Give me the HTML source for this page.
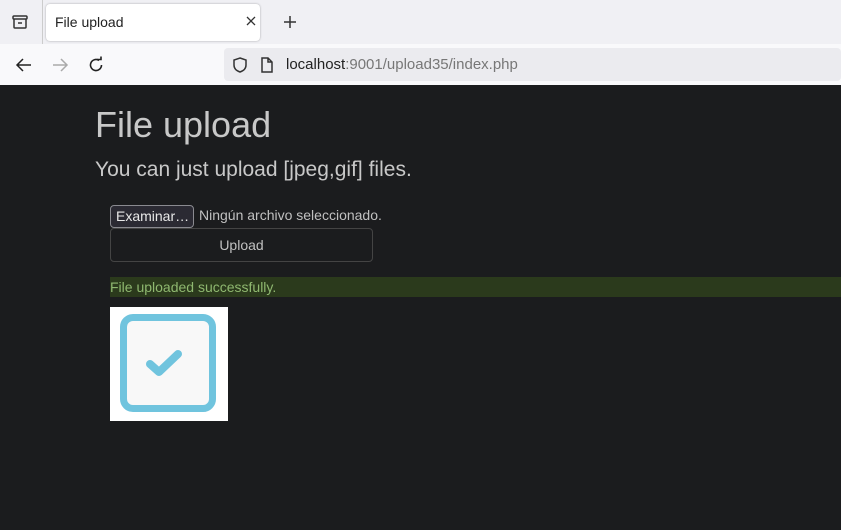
<!DOCTYPE html>
<html><head><style>
*{margin:0;padding:0;box-sizing:border-box}
body{width:841px;height:530px;overflow:hidden;background:#1b1c1e;font-family:"Liberation Sans",sans-serif;position:relative}
.tabbar{position:absolute;left:0;top:0;width:841px;height:44px;background:#f0f0f4}
.tab{position:absolute;left:46px;top:4px;width:214px;height:37px;background:#fff;border-radius:4px;box-shadow:0 0 2px rgba(0,0,0,.3)}
.nav{position:absolute;left:0;top:44px;width:841px;height:41px;background:#f9f9fb}
.url{position:absolute;left:224px;top:48px;width:617px;height:33px;background:#ebebef;border-radius:4px}
.t{position:absolute;white-space:nowrap}
</style></head><body>
<div class="tabbar"></div>
<div style="position:absolute;left:42px;top:0;width:1px;height:44px;background:#ccc"></div>
<svg class="t" style="left:11px;top:13px" width="18" height="18" viewBox="0 0 18 18" fill="none" stroke="#333" stroke-width="1.5"><rect x="2" y="3" width="14" height="3" rx="1"/><path d="M3 6v8a1 1 0 0 0 1 1h10a1 1 0 0 0 1-1V6M7 10h4"/></svg>
<div class="tab"></div>
<div class="t" style="left:55px;top:14px;font-size:14px;color:#222">File upload</div>
<svg class="t" style="left:246px;top:16px" width="10" height="10" viewBox="0 0 10 10" stroke="#333" stroke-width="1.3"><path d="M1 1l8 8M9 1l-8 8"/></svg>
<svg class="t" style="left:283px;top:15px" width="14" height="14" viewBox="0 0 14 14" stroke="#333" stroke-width="1.5"><path d="M7 1v12M1 7h12"/></svg>
<div class="nav"></div>
<svg class="t" style="left:15px;top:57px" width="18" height="16" viewBox="0 0 18 16" fill="none" stroke="#222" stroke-width="1.5"><path d="M16 8H2M8 2L2 8l6 6"/></svg>
<svg class="t" style="left:51px;top:57px" width="18" height="16" viewBox="0 0 18 16" fill="none" stroke="#aaa" stroke-width="1.5"><path d="M2 8h14M10 2l6 6-6 6"/></svg>
<svg class="t" style="left:87px;top:56px" width="18" height="18" viewBox="0 0 18 18" fill="none" stroke="#222" stroke-width="1.6"><path d="M14.5 9A5.5 5.5 0 1 1 12 4.4"/><path d="M10 3.5h4v-3" /></svg>
<div class="url"></div>
<svg class="t" style="left:231px;top:56px" width="18" height="18" viewBox="0 0 18 18" fill="none" stroke="#333" stroke-width="1.5"><path d="M9 2l6 2v5c0 4-3 6-6 7-3-1-6-3-6-7V4z"/></svg>
<svg class="t" style="left:259px;top:56px" width="16" height="18" viewBox="0 0 16 18" fill="none" stroke="#333" stroke-width="1.5"><path d="M3 2h6l4 4v10H3zM9 2v4h4"/></svg>
<div class="t" style="left:286px;top:56px;font-size:15px;color:#222">localhost<span style="color:#777">:9001/upload35/index.php</span></div>
<div class="t" style="left:95px;top:104px;font-size:36px;color:#c8c8c8">File upload</div>
<div class="t" style="left:95px;top:158px;font-size:21px;color:#c8c8c8">You can just upload [jpeg,gif] files.</div>
<div class="t" style="left:110px;top:205px;width:84px;height:23px;border:1px solid #8a8a90;border-radius:4px;background:#2b2a33;color:#e8e8e8;font-size:14px;padding:2px 0 0 5px">Examinar…</div>
<div class="t" style="left:199px;top:207px;font-size:14px;color:#c0c0c0">Ningún archivo seleccionado.</div>
<div class="t" style="left:110px;top:228px;width:263px;height:34px;border:1px solid #444;border-radius:4px;color:#c0c0c0;font-size:14px;text-align:center;line-height:32px">Upload</div>
<div class="t" style="left:110px;top:277px;width:731px;height:20px;background:#2b3a1c;color:#8fb870;font-size:14px;line-height:20px">File uploaded successfully.</div>
<div class="t" style="left:110px;top:307px;width:118px;height:114px;background:#fff"></div>
<div class="t" style="left:120px;top:314px;width:96px;height:98px;border:7px solid #70c4de;border-radius:13px;background:#f8f8f8"></div>
<svg class="t" style="left:145px;top:347px" width="42" height="32" viewBox="0 0 42 32"><path d="M5 17l9 8 19-18" fill="none" stroke="#70c4de" stroke-width="8" stroke-linecap="round" stroke-linejoin="round"/></svg>
</body></html>
